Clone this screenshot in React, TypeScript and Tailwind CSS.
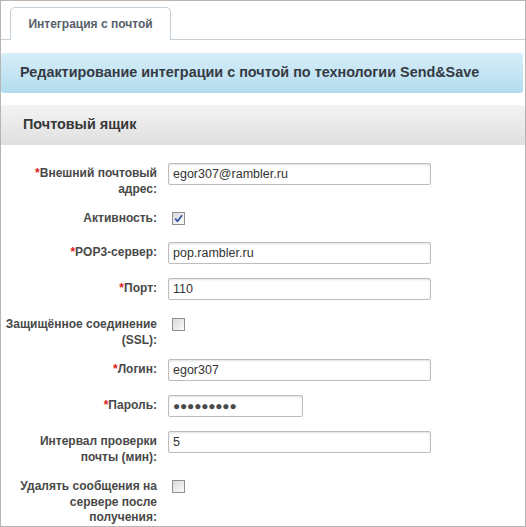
import React from 'react';

type Field =
  | { kind: 'text'; value: string }
  | { kind: 'password'; value: string }
  | { kind: 'check'; checked: boolean };

type Row = { label: string[]; required?: boolean; field: Field };

const ROWS: Row[] = [
  { label: ['Внешний почтовый', 'адрес:'], required: true, field: { kind: 'text', value: 'egor307@rambler.ru' } },
  { label: ['Активность:'], field: { kind: 'check', checked: true } },
  { label: ['POP3-сервер:'], required: true, field: { kind: 'text', value: 'pop.rambler.ru' } },
  { label: ['Порт:'], required: true, field: { kind: 'text', value: '110' } },
  { label: ['Защищённое соединение', '(SSL):'], field: { kind: 'check', checked: false } },
  { label: ['Логин:'], required: true, field: { kind: 'text', value: 'egor307' } },
  { label: ['Пароль:'], required: true, field: { kind: 'password', value: '●●●●●●●●●' } },
  { label: ['Интервал проверки', 'почты (мин):'], field: { kind: 'text', value: '5' } },
  { label: ['Удалять сообщения на', 'сервере после', 'получения:'], field: { kind: 'check', checked: false } },
];

const CheckBox = ({ checked }: { checked: boolean }) => (
  <div className="ml-[4px] w-[13px] h-[13px] border border-[#8e8f8f] bg-gradient-to-br from-[#d9d9d9] to-[#fbfbfb] flex items-center justify-center">
    {checked && (
      <svg width="9" height="9" viewBox="0 0 9 9">
        <path d="M1.2 4.6 L3.5 7.2 L8 1.2" fill="none" stroke="#2a4f9e" strokeWidth="1.7" />
      </svg>
    )}
  </div>
);

const FieldCell = ({ field }: { field: Field }) => {
  if (field.kind === 'check') {
    return (
      <div className="min-h-[23px] pt-[4px]">
        <CheckBox checked={field.checked} />
      </div>
    );
  }
  const isPass = field.kind === 'password';
  return (
    <div className="pb-[3px]">
      <input
        readOnly
        type="text"
        value={field.value}
        className={`block h-[22px] ${isPass ? 'w-[135px] text-[12px] text-[#4a4a4a] tracking-[-0.2px]' : 'w-[263px] text-[12.5px] text-[#333]'} border border-[#bdbdbd] rounded-[2px] shadow-[inset_0_1px_2px_rgba(0,0,0,0.12)] px-[4px] outline-none bg-white`}
      />
    </div>
  );
};

const App: React.FC = () => {
  return (
    <div className="w-[526px] h-[527px] border border-[#b5b5b5] overflow-hidden bg-white font-['Liberation_Sans',Arial,sans-serif]">
      {/* Tabs */}
      <div className="flex items-end h-[39px] border-b border-[#c8d0d6] pl-[9px]">
        <div className="h-[33px] w-[161px] -mb-px bg-white border border-b-0 border-[#c3d0d9] rounded-t-[5px] flex items-center justify-center text-[12px] font-bold text-[#56606a]">
          Интеграция с почтой
        </div>
      </div>

      {/* Title bar */}
      <div className="mt-[13px] mr-[2px] h-[40px] rounded-[3px] bg-gradient-to-b from-[#d7eef8] to-[#b3dcef] flex items-center pl-[19px] text-[14.4px] font-bold text-[#353b44]">
        Редактирование интеграции с почтой по технологии Send&amp;Save
      </div>

      {/* Section */}
      <div className="mt-[12px] h-[40px] rounded-t-[3px] bg-gradient-to-b from-[#f3f3f3] to-[#e0e0e0] flex items-center pl-[22px] text-[14.4px] font-bold text-[#373737]">
        Почтовый ящик
      </div>

      {/* Form */}
      <div className="pt-[11px]">
        {ROWS.map((row, i) => (
          <div key={i} className="flex items-start pt-[7px] pb-[4px]">
            <div className="w-[156px] shrink-0 text-right pt-[3px] text-[12px] leading-[15.5px] font-bold text-[#494949]">
              {row.label.map((line, j) => (
                <div key={j}>
                  {j === 0 && row.required && <span className="text-[#e01b1b]">*</span>}
                  {line}
                </div>
              ))}
            </div>
            <div className="ml-[11px]">
              <FieldCell field={row.field} />
            </div>
          </div>
        ))}
      </div>
    </div>
  );
};

export default App;
